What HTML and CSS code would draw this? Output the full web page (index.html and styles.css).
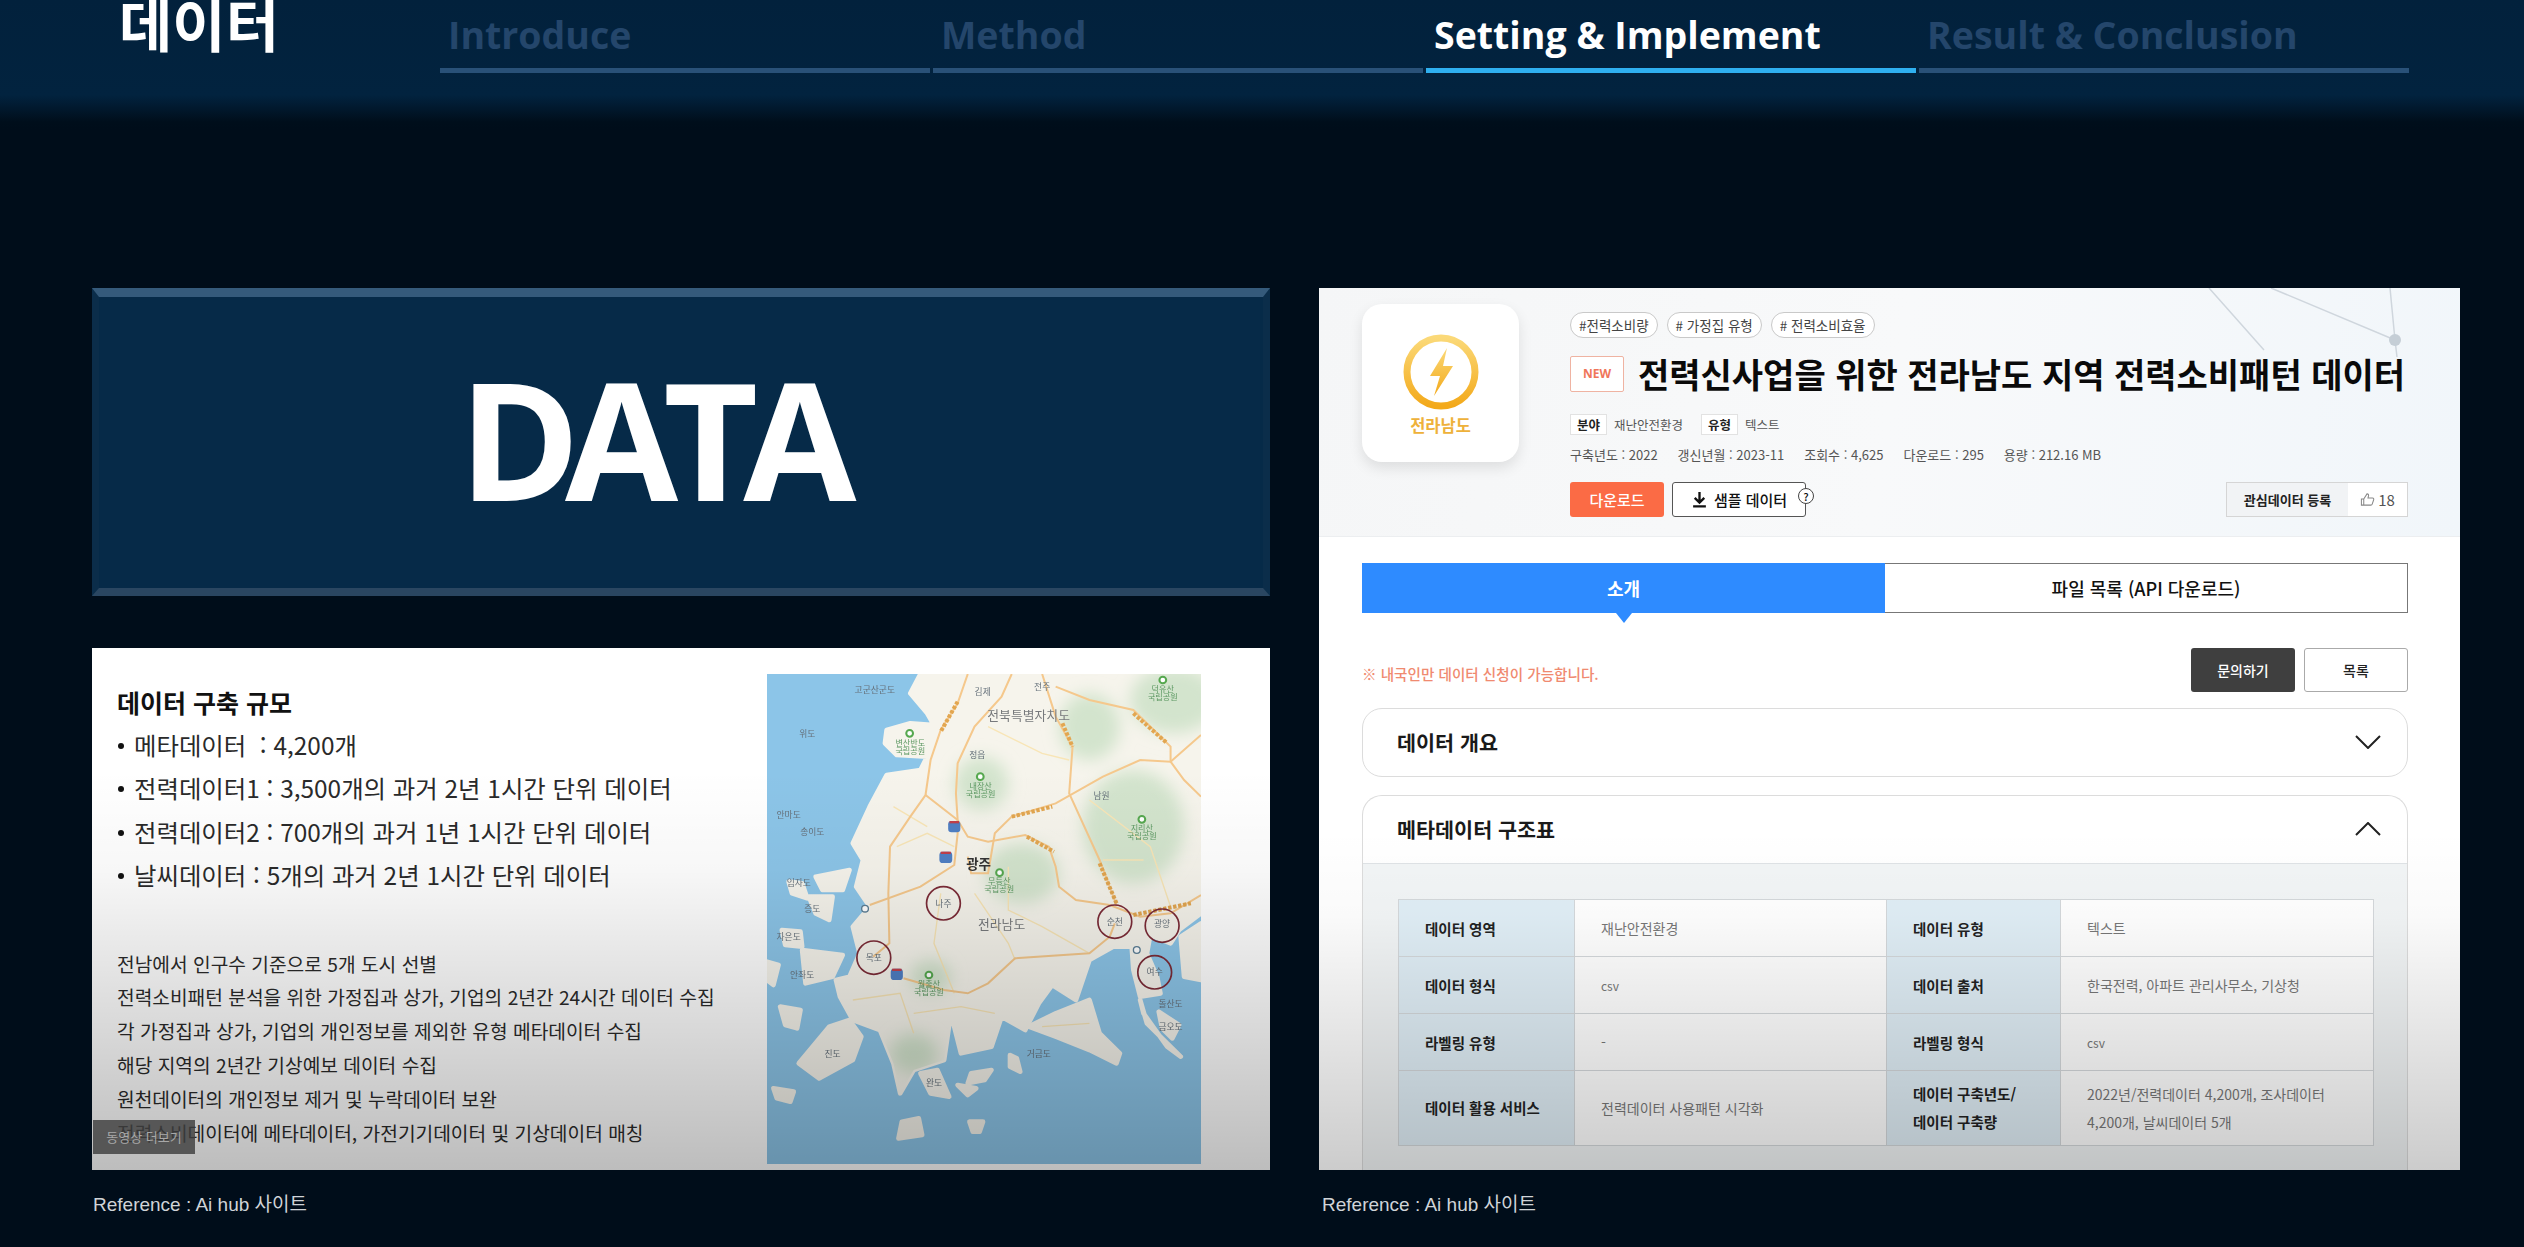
FILE: index.html
```html
<!DOCTYPE html>
<html lang="ko">
<head>
    <meta charset="UTF-8">
    <title>데이터</title>
    <link rel="stylesheet" href="styles.css">
</head>
<body>
    <header class="top">
        <h1 class="top-title">데이터</h1>
        <nav class="steps">
            <div class="step">Introduce</div>
            <div class="step">Method</div>
            <div class="step step-on">Setting &amp; Implement</div>
            <div class="step">Result &amp; Conclusion</div>
        </nav>
    </header>

    <main class="slide">
        <section class="col">
            <div class="data-box">DATA</div>
            <div class="panel scale">
                <div class="scale-text">
                    <h2 class="scale-title">데이터 구축 규모</h2>
                    <ul class="scale-list">
                        <li>메타데이터 &nbsp;: 4,200개</li>
                        <li>전력데이터1 : 3,500개의 과거 2년 1시간 단위 데이터</li>
                        <li>전력데이터2 : 700개의 과거 1년 1시간 단위 데이터</li>
                        <li>날씨데이터 : 5개의 과거 2년 1시간 단위 데이터</li>
                    </ul>
                    <div class="scale-notes">
                        <p>전남에서 인구수 기준으로 5개 도시 선별</p>
                        <p>전력소비패턴 분석을 위한 가정집과 상가, 기업의 2년간 24시간 데이터 수집</p>
                        <p>각 가정집과 상가, 기업의 개인정보를 제외한 유형 메타데이터 수집</p>
                        <p>해당 지역의 2년간 기상예보 데이터 수집</p>
                        <p>원천데이터의 개인정보 제거 및 누락데이터 보완</p>
                        <p>전력소비데이터에 메타데이터, 가전기기데이터 및 기상데이터 매칭</p>
                    </div>
                </div>
                <svg class="map" viewBox="46 42 1284 1470" preserveAspectRatio="none">
                    <defs>
                        <filter id="soft"><feGaussianBlur stdDeviation="24"/></filter>
                        <clipPath id="land-clip">
                            <path d="M500 42L470 100L520 160L540 195L470 190L400 210L395 250L430 285L520 290L500 330L400 345L350 440L300 550L330 600L310 680L350 740L300 800L320 880L290 950L250 960L262 1010L300 1080L380 1110L420 1210L440 1300L480 1230L570 1200L590 1060L620 1180L710 1160L740 1070L810 1110L850 1030L890 975L960 1020L1000 900L1070 860L1125 860L1130 930L1150 1010L1210 1000L1200 950L1170 880L1180 825L1240 850L1265 810L1330 760L1330 42Z"/>
                        </clipPath>
                    </defs>
                    <rect x="46" y="42" width="1284" height="1470" fill="#8cc5e8"/>
                    <g fill="#f6f4ec" stroke="#f6f4ec" stroke-width="14" stroke-linejoin="round">
                        <path d="M500 42L470 100L520 160L540 195L470 190L400 210L395 250L430 285L520 290L500 330L400 345L350 440L300 550L330 600L310 680L350 740L300 800L320 880L290 950L250 960L262 1010L300 1080L380 1110L420 1210L440 1300L480 1230L570 1200L590 1060L620 1180L710 1160L740 1070L810 1110L850 1030L890 975L960 1020L1000 900L1070 860L1125 860L1130 930L1150 1010L1210 1000L1200 950L1170 880L1180 825L1240 850L1265 810L1330 760L1330 42Z"/>
                        <path d="M820 1100L900 1060L1000 1020L1030 1120L1090 1180L1080 1210L1000 1170L900 1130Z"/>
                        <path d="M140 1210L230 1100L290 1080L325 1130L300 1200L200 1255Z"/>
                        <path d="M500 1240L550 1230L585 1310L530 1300Z"/>
                        <path d="M1150 1020L1170 1090L1270 1190L1230 1160L1160 1060Z"/>
                        <path d="M1270 830L1330 790L1330 960L1280 950Z"/>
                        <path d="M190 650L290 630L270 690L210 690Z"/>
                        <path d="M110 665L150 670L165 715L120 700Z"/>
                        <path d="M170 710L240 710L230 780L190 760Z"/>
                        <path d="M90 810L145 815L150 860L100 855Z"/>
                        <path d="M46 905L80 915L65 975L46 960Z"/>
                        <path d="M150 870L270 885L240 950L160 970Z"/>
                        <path d="M85 1040L145 1050L135 1105L100 1095Z"/>
                        <path d="M650 1240L710 1230L690 1260L640 1270Z"/>
                        <path d="M610 1275L665 1285L640 1305Z"/>
                        <path d="M445 1385L495 1375L505 1425L435 1435Z"/>
                        <path d="M645 1385L685 1385L675 1415L655 1415Z"/>
                        <path d="M765 1185L785 1195L795 1235L765 1220Z"/>
                        <path d="M65 1285L125 1295L115 1325L75 1315Z"/>
                        <path d="M1205 1055L1265 1095L1245 1135L1215 1105Z"/>
                    </g>
                    <g clip-path="url(#land-clip)" filter="url(#soft)" fill="#d3e4cd">
                        <ellipse cx="1130" cy="500" rx="150" ry="170"/>
                        <ellipse cx="1250" cy="120" rx="130" ry="100"/>
                        <ellipse cx="1000" cy="200" rx="90" ry="100"/>
                        <ellipse cx="680" cy="370" rx="80" ry="80"/>
                        <ellipse cx="800" cy="640" rx="110" ry="90"/>
                        <ellipse cx="530" cy="950" rx="60" ry="50"/>
                        <ellipse cx="480" cy="1180" rx="70" ry="60"/>
                    </g>
                    <g fill="none" stroke="#f8e5b6" stroke-width="4">
                        <path d="M430 560L520 520L600 560M560 700L540 850L600 1000M660 700L760 850L780 900M760 620L760 750L860 800L1000 880M1000 420L1180 560L1240 740M1040 600L1160 600M480 1060L620 1040L720 1060M420 440L520 500M300 1020L440 1000L480 1120M860 1100L1000 1090M700 200L860 280L940 300"/>
                    </g>
                    <g fill="none" stroke="#f5c88c" stroke-width="6">
                        <path d="M640 42L610 130L560 210L530 300L515 405L470 470L410 560L405 700L408 850L360 890"/>
                        <path d="M770 42L740 110L660 200L610 310L605 400L610 480L640 530L700 545L810 525L880 560L900 620L910 680L960 720L1060 735L1150 770L1240 760L1330 705"/>
                        <path d="M515 405L610 480M350 735L500 680L600 615L610 520L610 480"/>
                        <path d="M640 590L650 640L700 640L720 520L770 470L900 430L1040 350L1150 300L1240 305L1330 225"/>
                        <path d="M860 42L900 170L950 260L940 400L1030 600L1080 735M1240 305L1280 360L1330 410"/>
                        <path d="M900 80L1000 120L1130 150L1240 260L1240 305"/>
                        <path d="M450 955L570 990L640 1000L700 970L780 895L1000 880L1060 830L1075 790"/>
                    </g>
                    <g fill="none" stroke="#e2a650" stroke-width="12" stroke-dasharray="10 5">
                        <path d="M610 125L560 215M920 190L950 260M1130 160L1230 250M770 470L890 440M815 530L895 575M1030 610L1080 730M1130 765L1300 730"/>
                    </g>
                    <g fill="#4f7fc4">
                        <rect x="582" y="483" width="36" height="34" rx="10"/>
                        <rect x="556" y="575" width="38" height="34" rx="10"/>
                        <rect x="412" y="926" width="36" height="34" rx="10"/>
                    </g>
                    <g fill="#c2404a">
                        <rect x="586" y="483" width="28" height="7"/>
                        <rect x="560" y="575" width="30" height="7"/>
                        <rect x="416" y="926" width="28" height="7"/>
                    </g>
                    <g fill="#fff" stroke="#56a84f" stroke-width="6">
                        <circle cx="468" cy="220" r="10"/>
                        <circle cx="677" cy="350" r="10"/>
                        <circle cx="1155" cy="478" r="10"/>
                        <circle cx="734" cy="638" r="10"/>
                        <circle cx="525" cy="945" r="10"/>
                        <circle cx="1217" cy="60" r="10"/>
                    </g>
                    <g fill="#fff" stroke="#5c7f96" stroke-width="4">
                        <circle cx="336" cy="746" r="10"/>
                        <circle cx="1140" cy="870" r="10"/>
                    </g>
                    <g class="map-label">
                        <text x="684" y="104">김제</text>
                        <text x="860" y="90">전주</text>
                        <text x="668" y="294">정읍</text>
                        <text x="1036" y="418">남원</text>
                        <text x="568" y="740">나주</text>
                        <text x="1075" y="795">순천</text>
                        <text x="1215" y="800">광양</text>
                        <text x="1193" y="945">여수</text>
                        <text x="362" y="903">목포</text>
                        <text x="365" y="98">고군산군도</text>
                        <text x="165" y="232">위도</text>
                        <text x="240" y="1190">진도</text>
                        <text x="540" y="1278">완도</text>
                        <text x="850" y="1190">거금도</text>
                        <text x="1240" y="1040">돌산도</text>
                        <text x="1240" y="1110">금오도</text>
                        <text x="110" y="475">안마도</text>
                        <text x="180" y="525">송이도</text>
                        <text x="140" y="678">임자도</text>
                        <text x="180" y="755">증도</text>
                        <text x="110" y="840">자은도</text>
                        <text x="150" y="955">안좌도</text>
                    </g>
                    <g class="map-label map-park">
                        <text x="470" y="258">변산반도</text>
                        <text x="470" y="282">국립공원</text>
                        <text x="678" y="386">내장산</text>
                        <text x="678" y="410">국립공원</text>
                        <text x="1155" y="514">지리산</text>
                        <text x="1155" y="538">국립공원</text>
                        <text x="733" y="672">무등산</text>
                        <text x="733" y="696">국립공원</text>
                        <text x="525" y="982">월출산</text>
                        <text x="525" y="1006">국립공원</text>
                        <text x="1217" y="96">덕유산</text>
                        <text x="1217" y="120">국립공원</text>
                    </g>
                    <text class="map-big" x="820" y="180">전북특별자치도</text>
                    <text class="map-big" x="740" y="808">전라남도</text>
                    <text class="map-city" x="672" y="626">광주</text>
                    <g fill="none" stroke="#7c2b37" stroke-width="5">
                        <circle cx="568" cy="730" r="50"/>
                        <circle cx="362" cy="893" r="50"/>
                        <circle cx="1075" cy="785" r="50"/>
                        <circle cx="1215" cy="797" r="50"/>
                        <circle cx="1193" cy="937" r="50"/>
                    </g>
                </svg>
                <div class="more-tip">동영상 더보기</div>
            </div>
            <p class="ref">Reference : Ai hub 사이트</p>
        </section>

        <section class="col">
            <div class="panel hub">
                <div class="hub-head">
                    <svg class="hub-lines" viewBox="0 0 1141 80">
                        <path d="M890 0L945 62M952 0L1076 52M1071 0L1076 52L1078 69" fill="none" stroke="#cfd6dd" stroke-width="1.5"/>
                        <circle cx="1076" cy="52" r="6" fill="#c5ced6"/>
                    </svg>
                    <div class="hub-icon">
                        <svg class="hub-ring" viewBox="0 0 76 76">
                            <defs>
                                <linearGradient id="gold" x1="0" y1="0" x2="0" y2="1">
                                    <stop offset="0" stop-color="#fbd978"/>
                                    <stop offset="1" stop-color="#f3a91a"/>
                                </linearGradient>
                            </defs>
                            <circle cx="38" cy="38" r="34" fill="none" stroke="url(#gold)" stroke-width="7"/>
                            <path d="M44 14L27 42H37L31 62L50 32H40Z" fill="url(#gold)"/>
                        </svg>
                        <span class="hub-region">전라남도</span>
                    </div>
                    <div class="hub-info">
                        <div class="tags">
                            <span class="tag">#전력소비량</span>
                            <span class="tag"># 가정집 유형</span>
                            <span class="tag"># 전력소비효율</span>
                        </div>
                        <div class="hub-title-row">
                            <span class="new">NEW</span>
                            <h2 class="hub-title">전력신사업을 위한 전라남도 지역 전력소비패턴 데이터</h2>
                        </div>
                        <div class="kinds">
                            <span class="kind">분야</span><span class="kind-val">재난안전환경</span>
                            <span class="kind">유형</span><span class="kind-val">텍스트</span>
                        </div>
                        <div class="stats">
                            <span>구축년도 : 2022</span>
                            <span>갱신년월 : 2023-11</span>
                            <span>조회수 : 4,625</span>
                            <span>다운로드 : 295</span>
                            <span>용량 : 212.16 MB</span>
                        </div>
                        <div class="actions">
                            <button class="btn-down">다운로드</button>
                            <button class="btn-sample">
                                <svg class="ico-down" viewBox="0 0 16 16"><path d="M8 1V10M3.5 6.5L8 11L12.500 6.5M2 14.5H14" fill="none" stroke="#111" stroke-width="2.2"/></svg>
                                샘플 데이터
                                <span class="help">?</span>
                            </button>
                            <div class="like">
                                <span class="like-label">관심데이터 등록</span>
                                <span class="like-count">
                                    <svg class="ico-thumb" viewBox="0 0 16 16"><path d="M1.5 7.5H4V14H1.5ZM4 7.5L7.5 2C9 2 9.5 3 9 4.5L8.5 6.5H13.5C14.5 6.5 15 7.5 14.5 8.5L13 13C12.800 13.700 12.300 14 11.500 14H4" fill="none" stroke="#888" stroke-width="1.1"/></svg>
                                    18
                                </span>
                            </div>
                        </div>
                    </div>
                </div>
                <div class="hub-body">
                    <div class="tabs">
                        <div class="tab tab-on">소개</div>
                        <div class="tab">파일 목록 (API 다운로드)</div>
                    </div>
                    <div class="notice-row">
                        <span class="notice">※ 내국인만 데이터 신청이 가능합니다.</span>
                        <button class="btn-ask">문의하기</button>
                        <button class="btn-list">목록</button>
                    </div>
                    <div class="acc">
                        <div class="acc-head">
                            <span>데이터 개요</span>
                            <svg class="chev" viewBox="0 0 26 14"><path d="M1 1L13 13L25 1" fill="none" stroke="#222" stroke-width="2"/></svg>
                        </div>
                    </div>
                    <div class="acc acc-open">
                        <div class="acc-head">
                            <span>메타데이터 구조표</span>
                            <svg class="chev" viewBox="0 0 26 14"><path d="M1 13L13 1L25 13" fill="none" stroke="#222" stroke-width="2"/></svg>
                        </div>
                        <div class="acc-body">
                            <table class="meta">
                                <tr>
                                    <th>데이터 영역</th><td>재난안전환경</td>
                                    <th>데이터 유형</th><td>텍스트</td>
                                </tr>
                                <tr>
                                    <th>데이터 형식</th><td class="small">csv</td>
                                    <th>데이터 출처</th><td>한국전력, 아파트 관리사무소, 기상청</td>
                                </tr>
                                <tr>
                                    <th>라벨링 유형</th><td>-</td>
                                    <th>라벨링 형식</th><td class="small">csv</td>
                                </tr>
                                <tr class="meta-tall">
                                    <th>데이터 활용 서비스</th><td>전력데이터 사용패턴 시각화</td>
                                    <th>데이터 구축년도/<br>데이터 구축량</th><td>2022년/전력데이터 4,200개, 조사데이터<br>4,200개, 날씨데이터 5개</td>
                                </tr>
                            </table>
                        </div>
                    </div>
                </div>
            </div>
            <p class="ref ref-right">Reference : Ai hub 사이트</p>
        </section>
    </main>
</body>
</html>
```

FILE: styles.css
```css
* {
    box-sizing: border-box;
}

html, body {
    height: 1247px;
    overflow: hidden;
}

body {
    margin: 0;
    background-color: #000d1a;
    font-family: "Noto Sans CJK KR", "Noto Sans", sans-serif;
    color: #111;
}

/* top bar */
.top {
    display: flex;
    height: 130px;
    padding-left: 119px;
    overflow: hidden;
    background: linear-gradient(#02213c 0, #02233f 95px, #000e1b 122px, #000d1a 130px);
}

.top-title {
    width: 321px;
    margin: -18px 0 0;
    font-size: 58px;
    line-height: 80px;
    font-weight: 700;
    color: #fff;
}

.steps {
    display: grid;
    grid-template-columns: repeat(4, 490px);
    column-gap: 3px;
    height: 73px;
}

.step {
    padding: 8px 0 0 8px;
    border-bottom: 5px solid #295178;
    font-family: "Open Sans", sans-serif;
    font-size: 37.5px;
    line-height: 54px;
    font-weight: 700;
    color: #24466b;
}

.step-on {
    border-bottom-color: #2fb0f0;
    color: #fff;
}

/* slide body */
.slide {
    display: grid;
    grid-template-columns: 1178px 1141px;
    column-gap: 49px;
    padding: 158px 0 0 92px;
}

.data-box {
    display: flex;
    align-items: center;
    justify-content: center;
    height: 308px;
    margin-bottom: 52px;
    padding: 0 62px 10px 0;
    border-style: solid;
    border-width: 9px 7px 8px;
    border-color: #355a7b #0b2d4a #2a4661;
    background-color: #062a48;
    font-family: "Open Sans", sans-serif;
    font-size: 164px;
    font-weight: 700;
    letter-spacing: -15px;
    color: #fff;
}

.panel {
    position: relative;
    overflow: hidden;
    background-color: #fff;
}

/* bottom shade from the video player */
.panel::after {
    content: "";
    position: absolute;
    left: 0;
    right: 0;
    bottom: 0;
    height: 400px;
    background: linear-gradient(rgba(0, 0, 0, 0), rgba(0, 0, 0, 0.03) 25%, rgba(0, 0, 0, 0.26));
    pointer-events: none;
}

.hub::after {
    height: 340px;
    background: linear-gradient(rgba(0, 0, 0, 0), rgba(0, 0, 0, 0.02) 25%, rgba(0, 0, 0, 0.2));
}

.ref {
    margin: 23px 0 0 1px;
    font-family: "Liberation Sans", "Noto Sans CJK KR", sans-serif;
    font-size: 19px;
    line-height: 24px;
    color: #d0d4d8;
}

.ref-right {
    margin-left: 3px;
}

/* left panel */
.scale {
    display: flex;
    justify-content: space-between;
    height: 522px;
    padding: 26px 69px 0 25px;
}

.scale-title {
    margin: 10px 0 0;
    font-size: 25px;
    line-height: 36px;
    font-weight: 700;
}

.scale-list {
    margin: 3px 0 0;
    padding: 0;
    list-style: none;
    font-size: 24.4px;
    line-height: 43.4px;
    color: #2a2a2a;
}

.scale-list li {
    position: relative;
    padding-left: 17px;
    white-space: nowrap;
}

.scale-list li::before {
    content: "";
    position: absolute;
    left: 1px;
    top: 20px;
    width: 6px;
    height: 6px;
    border-radius: 50%;
    background-color: #111;
}

.scale-notes {
    margin-top: 51px;
    font-size: 19.2px;
    line-height: 33.8px;
    color: #2a2a2a;
}

.scale-notes p {
    margin: 0;
    white-space: nowrap;
}

.map {
    display: block;
    width: 434px;
    height: 490px;
    flex-shrink: 0;
    filter: blur(0.7px);
}

.map-label text,
.map-big,
.map-city {
    text-anchor: middle;
    font-family: "Noto Sans CJK KR", sans-serif;
}

.map-label {
    font-size: 26px;
    fill: #66717b;
}

.map-park {
    font-size: 24px;
    fill: #5c9862;
}

.map-big {
    font-size: 38px;
    fill: #77797c;
}

.map-city {
    font-size: 40px;
    font-weight: 700;
    fill: #333;
}

.more-tip {
    position: absolute;
    z-index: 2;
    left: 1px;
    top: 472px;
    width: 102px;
    height: 34px;
    background-color: rgba(62, 62, 62, 0.82);
    font-size: 13px;
    line-height: 34px;
    text-align: center;
    color: #a8a8a8;
}

/* right panel */
.hub {
    display: flex;
    flex-direction: column;
    height: 882px;
}

.hub-head {
    position: relative;
    display: flex;
    height: 249px;
    padding: 16px 52px 18px 43px;
    background: linear-gradient(100deg, #f5f6f7, #f8f9fa 50%, #f1f6fa);
    border-bottom: 1px solid #eceef0;
}

.hub-lines {
    position: absolute;
    left: 0;
    top: 0;
    width: 1141px;
    height: 80px;
}

.hub-icon {
    display: flex;
    flex-direction: column;
    align-items: center;
    width: 157px;
    height: 158px;
    margin-right: 51px;
    padding-top: 30px;
    border-radius: 20px;
    background-color: #fff;
    box-shadow: 0 6px 14px rgba(0, 0, 0, 0.1);
}

.hub-ring {
    width: 76px;
    height: 76px;
}

.hub-region {
    margin-top: 3px;
    font-size: 16.5px;
    line-height: 24px;
    font-weight: 700;
    color: #eeb13a;
}

.hub-info {
    position: relative;
    flex: 1;
    padding-top: 8px;
}

.tags {
    display: flex;
    gap: 9px;
    height: 26px;
}

.tag {
    padding: 0 8px;
    border: 1px solid #c9c9c9;
    border-radius: 13px;
    background-color: #fff;
    font-size: 13.5px;
    line-height: 24px;
    color: #444;
    white-space: nowrap;
}

.hub-title-row {
    display: flex;
    align-items: center;
    height: 36px;
    margin-top: 18px;
}

.new {
    width: 54px;
    height: 36px;
    margin-right: 14px;
    border: 1px solid #efb3a2;
    border-radius: 2px;
    background-color: #fff;
    font-family: "Noto Sans", sans-serif;
    font-size: 12px;
    line-height: 34px;
    font-weight: 700;
    text-align: center;
    color: #f0765a;
}

.hub-title {
    margin: 0;
    font-size: 34px;
    line-height: 40px;
    font-weight: 700;
    letter-spacing: 0;
    color: #0a0a0a;
    white-space: nowrap;
}

.kinds {
    display: flex;
    align-items: center;
    height: 21px;
    margin-top: 22px;
    font-size: 12.500px;
}

.kind {
    width: 37px;
    height: 21px;
    border: 1px solid #e2e2e2;
    background-color: #fff;
    line-height: 19px;
    font-weight: 700;
    text-align: center;
    color: #222;
}

.kind-val {
    margin: 0 18px 0 7px;
    color: #555;
}

.stats {
    display: flex;
    gap: 20px;
    height: 18px;
    margin-top: 11px;
    font-size: 13px;
    line-height: 18px;
    color: #555;
    white-space: nowrap;
}

.actions {
    display: flex;
    height: 35px;
    margin-top: 18px;
}

.actions button {
    font-family: inherit;
    font-size: 15px;
    font-weight: 500;
}

.btn-down {
    width: 94px;
    border: 0;
    border-radius: 3px;
    background-color: #fb6b45;
    color: #fff;
}

.btn-sample {
    position: relative;
    display: flex;
    align-items: center;
    justify-content: center;
    gap: 6px;
    width: 134px;
    margin-left: 8px;
    border: 1px solid #555;
    border-radius: 3px;
    background-color: #fff;
    color: #111;
}

.ico-down {
    width: 17px;
    height: 17px;
}

.help {
    position: absolute;
    right: -9px;
    top: 5px;
    width: 16px;
    height: 16px;
    border: 1px solid #444;
    border-radius: 50%;
    background-color: #fff;
    font-size: 11px;
    line-height: 14px;
    text-align: center;
}

.like {
    display: flex;
    width: 182px;
    margin-left: auto;
    border: 1px solid #d5d5d5;
    background-color: #fff;
    font-size: 13px;
    line-height: 33px;
}

.like-label {
    width: 121px;
    background-color: #f1f3f5;
    font-weight: 700;
    text-align: center;
    color: #222;
}

.like-count {
    display: flex;
    flex: 1;
    align-items: center;
    justify-content: center;
    gap: 3px;
    font-size: 15px;
    color: #555;
}

.ico-thumb {
    width: 15px;
    height: 15px;
}

.hub-body {
    display: flex;
    flex: 1;
    flex-direction: column;
    min-height: 0;
    padding: 26px 52px 0 43px;
}

.tabs {
    display: grid;
    grid-template-columns: 523px 523px;
    height: 50px;
}

.tab {
    position: relative;
    border: 1px solid #777;
    border-left: 0;
    font-size: 18px;
    line-height: 48px;
    font-weight: 500;
    text-align: center;
    color: #111;
}

.tab-on {
    border: 0;
    background-color: #2e8bff;
    line-height: 50px;
    font-weight: 700;
    color: #fff;
}

.tab-on::after {
    content: "";
    position: absolute;
    left: 254px;
    top: 50px;
    border-style: solid;
    border-width: 10px 8px 0;
    border-color: #2e8bff transparent transparent;
}

.notice-row {
    display: flex;
    align-items: center;
    gap: 9px;
    height: 44px;
    margin-top: 35px;
}

.notice {
    flex: 1;
    padding-top: 6px;
    font-size: 14.6px;
    font-weight: 500;
    color: #f08a70;
}

.notice-row button {
    width: 104px;
    height: 44px;
    border-radius: 3px;
    font-family: inherit;
    font-size: 14px;
    font-weight: 500;
}

.btn-ask {
    border: 0;
    background-color: #3f3f3f;
    color: #fff;
}

.btn-list {
    border: 1px solid #aaa;
    background-color: #fff;
    color: #222;
}

.acc {
    flex-shrink: 0;
    height: 69px;
    margin-top: 16px;
    border: 1px solid #dcdcdc;
    border-radius: 20px;
    background-color: #fff;
}

.acc-open {
    flex: 1;
    height: auto;
    margin-top: 18px;
    border-bottom: 0;
    border-radius: 20px 20px 0 0;
    overflow: hidden;
}

.acc-head {
    display: flex;
    align-items: center;
    justify-content: space-between;
    height: 67px;
    padding: 0 26px 2px 34px;
    font-size: 20.7px;
    font-weight: 700;
    color: #1a1a1a;
}

.chev {
    width: 26px;
    height: 14px;
}

.acc-body {
    height: 100%;
    padding: 35px 35px 0;
    border-top: 1px solid #dfe3e6;
    background-color: #f2f5f6;
}

.meta {
    width: 975px;
    table-layout: fixed;
    border-collapse: collapse;
    border: 1px solid #d4d8db;
    font-size: 14px;
}

.meta tr {
    height: 57px;
}

.meta .meta-tall {
    height: 75px;
}

.meta th,
.meta td {
    padding: 0 0 0 26px;
    border: 1px solid #d4d8db;
    text-align: left;
}

.meta th {
    background-color: #e0eef6;
    font-size: 14.5px;
    font-weight: 700;
    color: #222;
}

.meta td {
    background-color: #fff;
    color: #777;
}

.meta th:nth-child(1) {
    width: 176px;
}

.meta td:nth-child(2) {
    width: 312px;
}

.meta th:nth-child(3) {
    width: 174px;
}

.meta td:nth-child(4) {
    width: 313px;
}

.meta .small {
    font-size: 12px;
}

.meta-tall th,
.meta-tall td {
    line-height: 28px;
}
```
